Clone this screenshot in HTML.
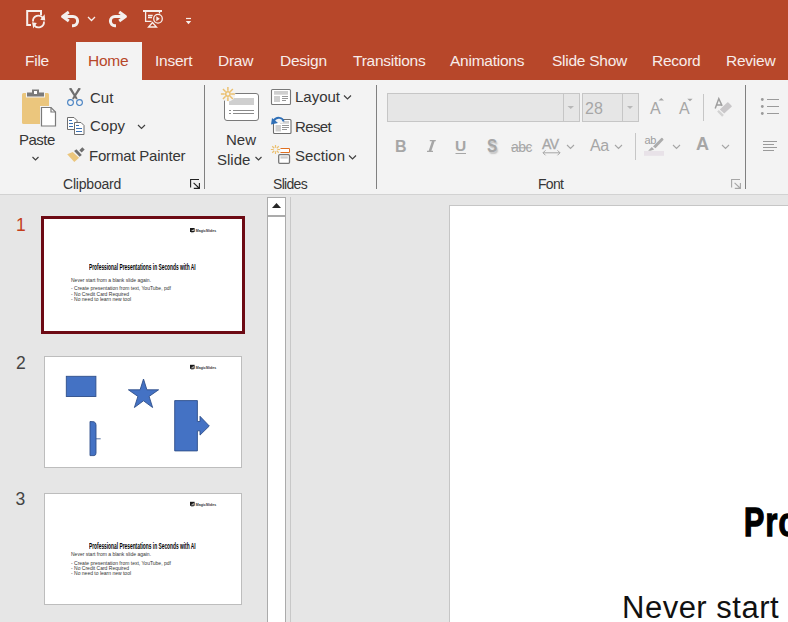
<!DOCTYPE html>
<html><head><meta charset="utf-8">
<style>
*{margin:0;padding:0;box-sizing:border-box}
html,body{width:788px;height:622px;overflow:hidden;background:#E6E6E6;font-family:"Liberation Sans",sans-serif;position:relative}
.a{position:absolute}
.t{position:absolute;white-space:nowrap;line-height:1}
#title{left:0;top:0;width:788px;height:80px;background:#B7472A}
.tab{color:#F7EDEA;font-size:15.5px;letter-spacing:-0.25px}
#hometab{left:76px;top:42px;width:66px;height:38px;background:#F3F3F3}
#ribbon{left:0;top:80px;width:788px;height:114px;background:#F3F3F3}
#rline{left:0;top:194px;width:788px;height:1px;background:#D2D2D2}
.rt{color:#363636;font-size:15px}
.gl{color:#363636;font-size:14px}
.sep{background:#C6C6C6;width:1px}
.dis{color:#A6A6A6}
.num{font-size:17.5px;color:#444}
.thumb{background:#fff}
.tt{font-weight:bold;color:#000;font-size:9.5px;transform-origin:0 0;transform:scaleX(0.51)}
.tb{font-size:5px;color:#333;line-height:5px}
#svg{position:absolute;left:0;top:0}
</style></head><body>
<div id="title" class="a"></div>
<div id="hometab" class="a"></div>
<div id="ribbon" class="a"></div>
<div id="rline" class="a"></div>

<!-- tabs -->
<div class="t tab" style="left:25px;top:53px">File</div>
<div class="t tab" style="left:88px;top:53px;color:#B7472A">Home</div>
<div class="t tab" style="left:155px;top:53px">Insert</div>
<div class="t tab" style="left:218px;top:53px">Draw</div>
<div class="t tab" style="left:280px;top:53px">Design</div>
<div class="t tab" style="left:353px;top:53px">Transitions</div>
<div class="t tab" style="left:450px;top:53px">Animations</div>
<div class="t tab" style="left:552px;top:53px">Slide Show</div>
<div class="t tab" style="left:652px;top:53px">Record</div>
<div class="t tab" style="left:726px;top:53px">Review</div>

<!-- clipboard group -->
<div class="t rt" style="left:19px;top:132px;letter-spacing:-0.5px">Paste</div>
<div class="t rt" style="left:90px;top:90px">Cut</div>
<div class="t rt" style="left:90px;top:118px">Copy</div>
<div class="t rt" style="left:89px;top:148px;letter-spacing:-0.2px">Format Painter</div>
<div class="t gl" style="left:63px;top:177px;letter-spacing:-0.2px">Clipboard</div>
<div class="a" style="left:204px;top:85px;width:1px;height:104px;background:#808080"></div>

<!-- slides group -->
<div class="t rt" style="left:226px;top:132px">New</div>
<div class="t rt" style="left:217px;top:152px">Slide</div>
<div class="t rt" style="left:295px;top:89px">Layout</div>
<div class="t rt" style="left:295px;top:119px;letter-spacing:-0.6px">Reset</div>
<div class="t rt" style="left:295px;top:148px">Section</div>
<div class="t gl" style="left:273px;top:177px;letter-spacing:-0.7px">Slides</div>
<div class="a" style="left:376px;top:85px;width:1px;height:104px;background:#808080"></div>

<!-- font group -->
<div class="a" style="left:387px;top:93px;width:193px;height:29px;background:#E6E6E6;border:1px solid #C6C6C6"></div>
<div class="a sep" style="left:563px;top:93px;height:29px"></div>
<div class="a" style="left:582px;top:93px;width:57px;height:29px;background:#E6E6E6;border:1px solid #C6C6C6"></div>
<div class="a sep" style="left:622px;top:93px;height:29px"></div>
<div class="t dis" style="left:585px;top:101px;font-size:16px">28</div>
<div class="t dis" style="left:395px;top:139px;font-size:16px;font-weight:bold">B</div>
<div class="t dis" style="left:455px;top:137.5px;font-size:15.5px;font-weight:bold">U</div>
<div class="t dis" style="left:487px;top:137px;font-size:18px;font-weight:bold;transform:scaleX(0.85);transform-origin:0 0;text-shadow:1.5px 1.5px 1.5px #c4c4c4">S</div>
<div class="t dis" style="left:511px;top:140px;font-size:14px;letter-spacing:-0.5px">abc</div>
<div class="t dis" style="left:542px;top:137px;font-size:14px;letter-spacing:-0.5px;-webkit-text-stroke:0.3px #A6A6A6">AV</div>
<div class="t dis" style="left:590px;top:138px;font-size:16px;letter-spacing:-0.5px">Aa</div>
<div class="t dis" style="left:644.5px;top:135px;font-size:11px;letter-spacing:-0.3px;color:#9E9E9E">ab</div>
<div class="t dis" style="left:696px;top:135px;font-size:18px;font-weight:bold">A</div>
<div class="t dis" style="left:650px;top:101px;font-size:16px">A</div>
<div class="t dis" style="left:679px;top:101px;font-size:16px">A</div>
<div class="t gl" style="left:538px;top:177px;letter-spacing:-0.7px">Font</div>
<div class="a" style="left:745px;top:85px;width:1px;height:104px;background:#808080"></div>

<!-- pane -->
<div class="a" style="left:290px;top:197px;width:1px;height:425px;background:#C8C8C8"></div>
<div class="a" style="left:267px;top:197px;width:19px;height:430px;background:#fff;border:1px solid #ABABAB"></div>
<div class="a" style="left:267px;top:215px;width:19px;height:2px;background:#ABABAB"></div>

<div class="t num" style="left:16px;top:217px;color:#C43E1C">1</div>
<div class="t num" style="left:16px;top:355px">2</div>
<div class="t num" style="left:15.5px;top:491px">3</div>

<div class="a thumb" style="left:41px;top:216px;width:204px;height:118px;border:3px solid #6D0A14"></div>
<div class="a thumb" style="left:44px;top:356px;width:198px;height:112px;border:1px solid #BDBDBD"></div>
<div class="a thumb" style="left:44px;top:493px;width:198px;height:112px;border:1px solid #BDBDBD"></div>

<!-- thumb 1 text -->
<div class="t tt" style="left:89px;top:262px">Professional Presentations in Seconds with AI</div>
<div class="t tb" style="left:71px;top:278px">Never start from a blank slide again.</div>
<div class="t tb" style="left:71px;top:286px">- Create presentation from text, YouTube, pdf</div>
<div class="t tb" style="left:71px;top:291.5px">- No Credit Card Required</div>
<div class="t tb" style="left:71px;top:297px">- No need to learn new tool</div>
<!-- thumb 3 text -->
<div class="t tt" style="left:89px;top:540.5px">Professional Presentations in Seconds with AI</div>
<div class="t tb" style="left:71px;top:552px">Never start from a blank slide again.</div>
<div class="t tb" style="left:71px;top:560.5px">- Create presentation from text, YouTube, pdf</div>
<div class="t tb" style="left:71px;top:565.7px">- No Credit Card Required</div>
<div class="t tb" style="left:71px;top:571.4px">- No need to learn new tool</div>

<!-- main slide -->
<div class="a" style="left:449px;top:205px;width:400px;height:430px;background:#fff;border:1px solid #C6C6C6"></div>
<div class="t" style="left:744px;top:502px;font-size:40px;font-weight:bold;color:#000;-webkit-text-stroke:1.4px #000;letter-spacing:1.5px;transform-origin:0 0;transform:scaleX(0.76)">Professional</div>
<div class="t" style="left:622px;top:592px;font-size:31px;letter-spacing:0.5px;color:#111">Never start</div>

<svg id="svg" width="788" height="622" viewBox="0 0 788 622">
<!-- QAT -->
<path d="M31 25 H27.2 V11 H41 V15" fill="none" stroke="#F7EFEC" stroke-width="2"/>
<g fill="none" stroke="#F7EFEC" stroke-width="1.8">
 <path d="M33 21.5 A5.5 5.5 0 0 1 43 18"/>
 <path d="M44 21.5 A5.5 5.5 0 0 1 34 25"/>
</g>
<path d="M40.2 19.8 L45.2 20.6 L44.6 14.2Z M32 22.3 L36.8 23.1 L33.3 28.6Z" fill="#F7EFEC"/>
<g fill="none" stroke="#F4F0EE" stroke-width="3" stroke-linejoin="round">
 <path d="M64 16.5 H73 A4.6 4.6 0 0 1 73 25.7 H72"/>
 <path d="M68.8 12 L62.6 16.5 L68.8 21"/>
 <path d="M124 16.5 H115 A4.6 4.6 0 0 0 115 25.7 H116"/>
 <path d="M119.2 12 L125.4 16.5 L119.2 21"/>
</g>
<path d="M88 17 L91.5 20.5 L95 17" fill="none" stroke="#F7EFEC" stroke-width="1.3"/>
<path d="M143 11 H162" stroke="#F7EFEC" stroke-width="2"/>
<g fill="none" stroke="#F7EFEC" stroke-width="1.3">
 <path d="M145.6 12 V21.3 H151.5"/>
 <path d="M159.5 12 V13.5"/>
 <circle cx="158" cy="18.75" r="4.3"/>
 <path d="M148 15.5 H152.7 M148 17.5 H152"/>
 <path d="M152.5 22.5 L148.5 27 H156.5Z"/>
</g>
<path d="M156.3 16.3 L159.8 18.75 L156.3 21.2Z" fill="#F7EFEC"/>
<path d="M186 18.5 H191" stroke="#F7EFEC" stroke-width="1.2"/>
<path d="M185.8 21 H191.2 L188.5 24.3Z" fill="#F7EFEC"/>

<!-- Paste -->
<rect x="22" y="93" width="27" height="31" rx="1.5" fill="#EBC67D"/>
<path d="M26 91.5 H45 V97.5 H26Z" fill="#F3F3F3"/>
<path d="M27 92.5 H32 V89.5 H39 V92.5 H44 V96.5 H27Z" fill="#7A7A7A"/>
<rect x="34" y="91" width="3" height="3" fill="#fff"/>
<path d="M40 106 H52 L57 111 V127 H40Z" fill="#F3F3F3"/>
<path d="M41.5 107.5 H51 L55.5 112 V126 H41.5Z" fill="#fff" stroke="#7A7A7A" stroke-width="1.2"/>
<path d="M51 107.5 V112 H55.5" fill="none" stroke="#7A7A7A" stroke-width="1.2"/>
<path d="M32.5 157 L35.5 160 L38.5 157" fill="none" stroke="#404040" stroke-width="1.2"/>

<!-- Cut -->
<path d="M69 88.8 Q69.6 87.6 71.4 88 L77.7 98.6 L76.1 99.5Z" fill="#6E6E6E"/><path d="M80.8 88.8 Q80.2 87.6 78.4 88 L72.1 98.6 L73.7 99.5Z" fill="#6E6E6E"/>
<circle cx="70.5" cy="102.5" r="2.9" fill="#F3F3F3" stroke="#4580C2" stroke-width="1.05"/>
<circle cx="79.5" cy="102.5" r="2.9" fill="#F3F3F3" stroke="#4580C2" stroke-width="1.05"/>
<!-- Copy -->
<path d="M67.5 117.5 H74 L77 120.5 V129.5 H67.5Z" fill="#fff" stroke="#6E6E6E" stroke-width="1"/>
<path d="M74.5 122.5 H81 L84 125.5 V134.5 H74.5Z" fill="#fff" stroke="#6E6E6E" stroke-width="1"/>
<path d="M69 120.5 H72 M69 123.5 H73 M69 126.5 H73 M76 125.5 H79 M76 128.5 H82 M76 131.5 H82" stroke="#3B72B5" stroke-width="1"/>
<path d="M138 125 L141.5 128.5 L145 125" fill="none" stroke="#404040" stroke-width="1.2"/>
<!-- Format painter -->
<path d="M67.2 154.3 L72.7 152 L79.1 157.7 L74.3 162Z" fill="#EBC67D"/>
<path d="M74.1 151 L76.4 149.2 L81.8 155 L79.6 156.8Z" fill="#6E6E6E"/>
<path d="M79.3 150.2 L82.3 147.3 L84.7 149.6 L81.7 152.5Z" fill="#6E6E6E"/>

<!-- New slide -->
<rect x="224.5" y="93.5" width="34" height="27" rx="2.5" fill="#fff" stroke="#7A7A7A" stroke-width="1"/>
<rect x="229" y="98" width="25" height="7" fill="#CFCFCF"/>
<path d="M229 110.5 H231 M233 110.5 H254 M229 113.5 H231 M233 113.5 H254" stroke="#8A8A8A" stroke-width="1"/>
<circle cx="227.9" cy="94" r="7.5" fill="#F3F3F3"/><path d="M231.10 94.00 L234.90 94.00 M230.16 96.26 L232.85 98.95 M227.90 97.20 L227.90 101.00 M225.64 96.26 L222.95 98.95 M224.70 94.00 L220.90 94.00 M225.64 91.74 L222.95 89.05 M227.90 90.80 L227.90 87.00 M230.16 91.74 L232.85 89.05 " stroke="#EBC070" stroke-width="1.5"/><circle cx="227.9" cy="94" r="2.2" fill="none" stroke="#EBC070" stroke-width="1.5"/>
<path d="M255.5 157 L258.5 160 L261.5 157" fill="none" stroke="#404040" stroke-width="1.2"/>

<!-- Layout -->
<rect x="271.5" y="89.5" width="19" height="15" rx="1" fill="#fff" stroke="#787878" stroke-width="1.1"/>
<rect x="274" y="91" width="14" height="3.7" fill="#CFCFCF"/>
<rect x="274" y="96" width="6" height="6" fill="#CFCFCF"/>
<path d="M282 96.5 H288 M282 98.5 H288 M282 100.5 H286" stroke="#8A8A8A" stroke-width="0.9"/>
<path d="M344 95.5 L347.5 99 L351 95.5" fill="none" stroke="#404040" stroke-width="1.2"/>
<!-- Reset -->
<rect x="273.5" y="119.5" width="17.5" height="14" rx="1" fill="#fff" stroke="#6E6E6E" stroke-width="1.1"/>
<rect x="280" y="121" width="9" height="2.7" fill="#CFCFCF"/>
<rect x="275.5" y="125" width="5.5" height="6.5" fill="#CFCFCF"/>
<path d="M282 125.5 H289 M282 127.5 H289 M282 129.5 H287" stroke="#8A8A8A" stroke-width="0.9"/>
<path d="M270 117 H283 V123 H270Z" fill="#F3F3F3"/>
<path d="M283.5 121.5 C283 117.5 276.5 116 273.5 121" fill="none" stroke="#2E6FB7" stroke-width="2"/>
<path d="M271 124.5 L272 118 L278 123Z" fill="#2E6FB7"/>
<!-- Section -->
<path d="M277.30 149.50 L280.10 149.50 M276.77 150.77 L278.75 152.75 M275.50 151.30 L275.50 154.10 M274.23 150.77 L272.25 152.75 M273.70 149.50 L270.90 149.50 M274.23 148.23 L272.25 146.25 M275.50 147.70 L275.50 144.90 M276.77 148.23 L278.75 146.25 " stroke="#EBC070" stroke-width="1.2"/>
<path d="M280.5 148.5 H289.5 V152.5 H280.5" fill="#fff" stroke="#E07020" stroke-width="1"/>
<rect x="278.7" y="154.7" width="10.8" height="8.6" rx="1" fill="#fff" stroke="#777" stroke-width="1.3"/>
<rect x="280.5" y="156.3" width="7.3" height="2.3" fill="#CFCFCF"/>
<path d="M349 155.5 L352.5 159 L356 155.5" fill="none" stroke="#404040" stroke-width="1.2"/>

<!-- font group extras -->
<path d="M429.8 140 H435.8 V141.3 H434.6 L431.4 150.7 H433 V152 H427 V150.7 H428.7 L431.9 141.3 H429.8Z" fill="#A6A6A6"/>
<path d="M567.5 106 L574 106 L570.75 109Z" fill="#B8B8B8"/>
<path d="M627 106 L633 106 L630 109Z" fill="#B8B8B8"/>
<path d="M658.5 100.5 L661.3 98 L664 100.5Z" fill="#A6A6A6"/>
<path d="M687.3 98.8 L692.6 98.8 L690 101.3Z" fill="#A6A6A6"/>
<rect x="703" y="94" width="1" height="27" fill="#C6C6C6"/>
<path d="M715.2 108.4 L718.8 98.6 L722.2 106 M716.4 105.1 H721.5" fill="none" stroke="#9E9E9E" stroke-width="1.5"/>
<path d="M718.8 109.2 L727 101.6 Q727.8 101 728.6 101.7 L732.4 105.5 Q733 106.3 732.3 107 L724.3 114.2Z" fill="#F3F3F3"/><path d="M719.8 109.4 L727.2 102.4 Q727.8 101.9 728.4 102.5 L731.6 105.7 Q732.1 106.3 731.6 106.8 L724.2 113.4Z" fill="#C9C7C9"/>
<path d="M717.1 111.6 L718.8 110 L723.9 115.1 L722.1 116.8Z" fill="#D2D2D2"/>
<path d="M511 147.8 H531" stroke="#A6A6A6" stroke-width="1"/>
<path d="M455.5 153.5 H466" stroke="#A6A6A6" stroke-width="1"/>
<path d="M543 152.8 H560 M545.5 150.3 L543 152.8 L545.5 155.3 M557.5 150.3 L560 152.8 L557.5 155.3" fill="none" stroke="#A6A6A6" stroke-width="1"/>
<path d="M567 145 L570.5 148.5 L574 145 M615 145 L618.5 148.5 L622 145 M673 145 L676.5 148.5 L680 145 M722 145 L725.5 148.5 L729 145" fill="none" stroke="#A6A6A6" stroke-width="1.1"/>
<rect x="635" y="133" width="1" height="27" fill="#C6C6C6"/>
<path d="M653 146.4 L661.3 137.9 Q662.5 137 663.6 139.7 L655.5 148.3Z" fill="#ACACAC"/><path d="M648.1 150.8 L651.8 147 L654.2 149.6 L650.5 150.8Z" fill="#ACACAC"/>
<rect x="644" y="151" width="20" height="4.8" fill="#E8E2E8"/>
<!-- paragraph -->
<g fill="#9A9A9A"><circle cx="762.3" cy="99.5" r="1.4"/><circle cx="762.3" cy="106.5" r="1.4"/><circle cx="762.3" cy="113.5" r="1.4"/></g>
<path d="M767 99.5 H779 M767 106.5 H779 M767 113.5 H779 M763 141.5 H777 M763 144.5 H774 M763 147.5 H777 M763 150.5 H774" stroke="#9A9A9A" stroke-width="1"/>
<!-- dialog launchers -->
<path d="M199 179.5 H190.6 V187.6 M193.6 182.8 L199 188 M199.4 183 V188.4 H193.8" fill="none" stroke="#222" stroke-width="1.1"/>
<path d="M740 179.5 H731.6 V187.6 M734.6 182.8 L740 188 M740.4 183 V188.4 H734.8" fill="none" stroke="#A6A6A6" stroke-width="1.1"/>

<!-- scroll arrow -->
<path d="M272 208 L276.5 203 L281 208Z" fill="#262626"/>

<!-- thumb logos -->
<g>
<path d="M190 228 H194.6 V232 H190Z" fill="#1a1a1a"/><path d="M191 231 L193.8 229.2 V231Z" fill="#fff" opacity="0.8"/><path d="M191 232.6 H193.6" stroke="#555" stroke-width="0.5"/>
 <text x="195.8" y="232.1" font-family="Liberation Sans" font-weight="bold" font-size="4.3" fill="#333" textLength="20.3" lengthAdjust="spacingAndGlyphs">MagicSlides</text>
<path d="M190 364.8 H194.6 V368.8 H190Z" fill="#1a1a1a"/><path d="M191 367.8 L193.8 366.0 V367.8Z" fill="#fff" opacity="0.8"/><path d="M191 369.40000000000003 H193.6" stroke="#555" stroke-width="0.5"/>
 <text x="195.8" y="368.90000000000003" font-family="Liberation Sans" font-weight="bold" font-size="4.3" fill="#333" textLength="20.3" lengthAdjust="spacingAndGlyphs">MagicSlides</text>
<path d="M190 501.8 H194.6 V505.8 H190Z" fill="#1a1a1a"/><path d="M191 504.8 L193.8 503.0 V504.8Z" fill="#fff" opacity="0.8"/><path d="M191 506.40000000000003 H193.6" stroke="#555" stroke-width="0.5"/>
 <text x="195.8" y="505.90000000000003" font-family="Liberation Sans" font-weight="bold" font-size="4.3" fill="#333" textLength="20.3" lengthAdjust="spacingAndGlyphs">MagicSlides</text>
</g>
<!-- thumb 2 shapes -->
<g fill="#4472C4" stroke="#2F4F8A" stroke-width="0.9">
 <rect x="66.3" y="376.3" width="29.6" height="20.2"/>
 <path d="M143.5 379 L146.9 389.8 L158.6 389.8 L149.1 396.4 L152.6 407.5 L143.5 400.8 L134.4 407.5 L137.9 396.4 L128.4 389.8 L140.1 389.8Z"/>
 <path d="M90 421.5 L94 421.8 Q96 422.5 96 425 V453 Q96 455.5 94 455.6 L90 455.6Z"/>
 <path d="M174.7 400.6 H197.4 V421.5 H200 V416.3 L209.3 426 L200 435.1 V430.8 H197.4 V450.9 H174.7Z"/>
</g>
<path d="M96 438.8 H100.7" stroke="#2F4F8A" stroke-width="0.8"/>
</svg>
</body></html>
